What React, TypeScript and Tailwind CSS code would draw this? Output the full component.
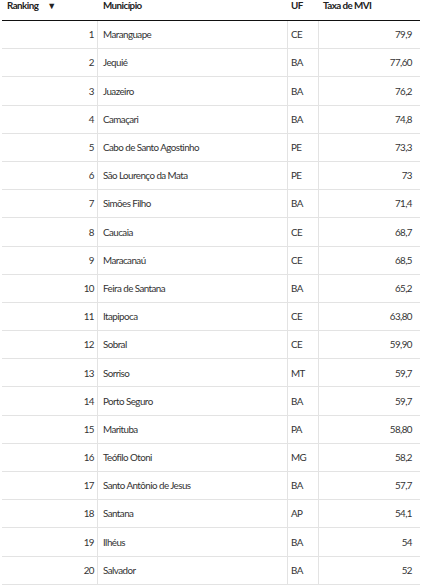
const rows: [number, string, string, string][] = [
  [1, "Maranguape", "CE", "79,9"],
  [2, "Jequié", "BA", "77,60"],
  [3, "Juazeiro", "BA", "76,2"],
  [4, "Camaçari", "BA", "74,8"],
  [5, "Cabo de Santo Agostinho", "PE", "73,3"],
  [6, "São Lourenço da Mata", "PE", "73"],
  [7, "Simões Filho", "BA", "71,4"],
  [8, "Caucaia", "CE", "68,7"],
  [9, "Maracanaú", "CE", "68,5"],
  [10, "Feira de Santana", "BA", "65,2"],
  [11, "Itapipoca", "CE", "63,80"],
  [12, "Sobral", "CE", "59,90"],
  [13, "Sorriso", "MT", "59,7"],
  [14, "Porto Seguro", "BA", "59,7"],
  [15, "Marituba", "PA", "58,80"],
  [16, "Teófilo Otoni", "MG", "58,2"],
  [17, "Santo Antônio de Jesus", "BA", "57,7"],
  [18, "Santana", "AP", "54,1"],
  [19, "Ilhéus", "BA", "54"],
  [20, "Salvador", "BA", "52"],
];

export default function App() {
  return (
    <div className="w-[422px] h-[587px] bg-white px-[2px] text-[9.8px] tracking-[-0.55px] text-[#333] [font-family:Lato,sans-serif] overflow-hidden">
      <div className="grid grid-cols-[96px_190px_31px_97px] h-[21px] border-b-[1.5px] border-[#111] font-bold text-[#222] leading-[11px]">
        <div className="pl-[5px] flex gap-[9px]">
          <span>Ranking</span>
          <span className="text-[9px]">▼</span>
        </div>
        <div className="pl-[5px]">Município</div>
        <div className="pl-[3px]">UF</div>
        <div className="pl-[4px]">Taxa de MVI</div>
      </div>
      {rows.map(([rank, city, uf, rate]) => (
        <div
          key={rank}
          className="grid grid-cols-[96px_190px_31px_97px] h-[28.2px] border-b border-[#e3e3e3] items-stretch"
        >
          <div className="flex items-center justify-end pr-[3px] border-r border-[#e3e3e3]">{rank}</div>
          <div className="flex items-center pl-[5px] border-r border-[#e3e3e3]">{city}</div>
          <div className="flex items-center pl-[3px] border-r border-[#e3e3e3]">{uf}</div>
          <div className="flex items-center justify-end pr-[4px]">{rate}</div>
        </div>
      ))}
    </div>
  );
}
